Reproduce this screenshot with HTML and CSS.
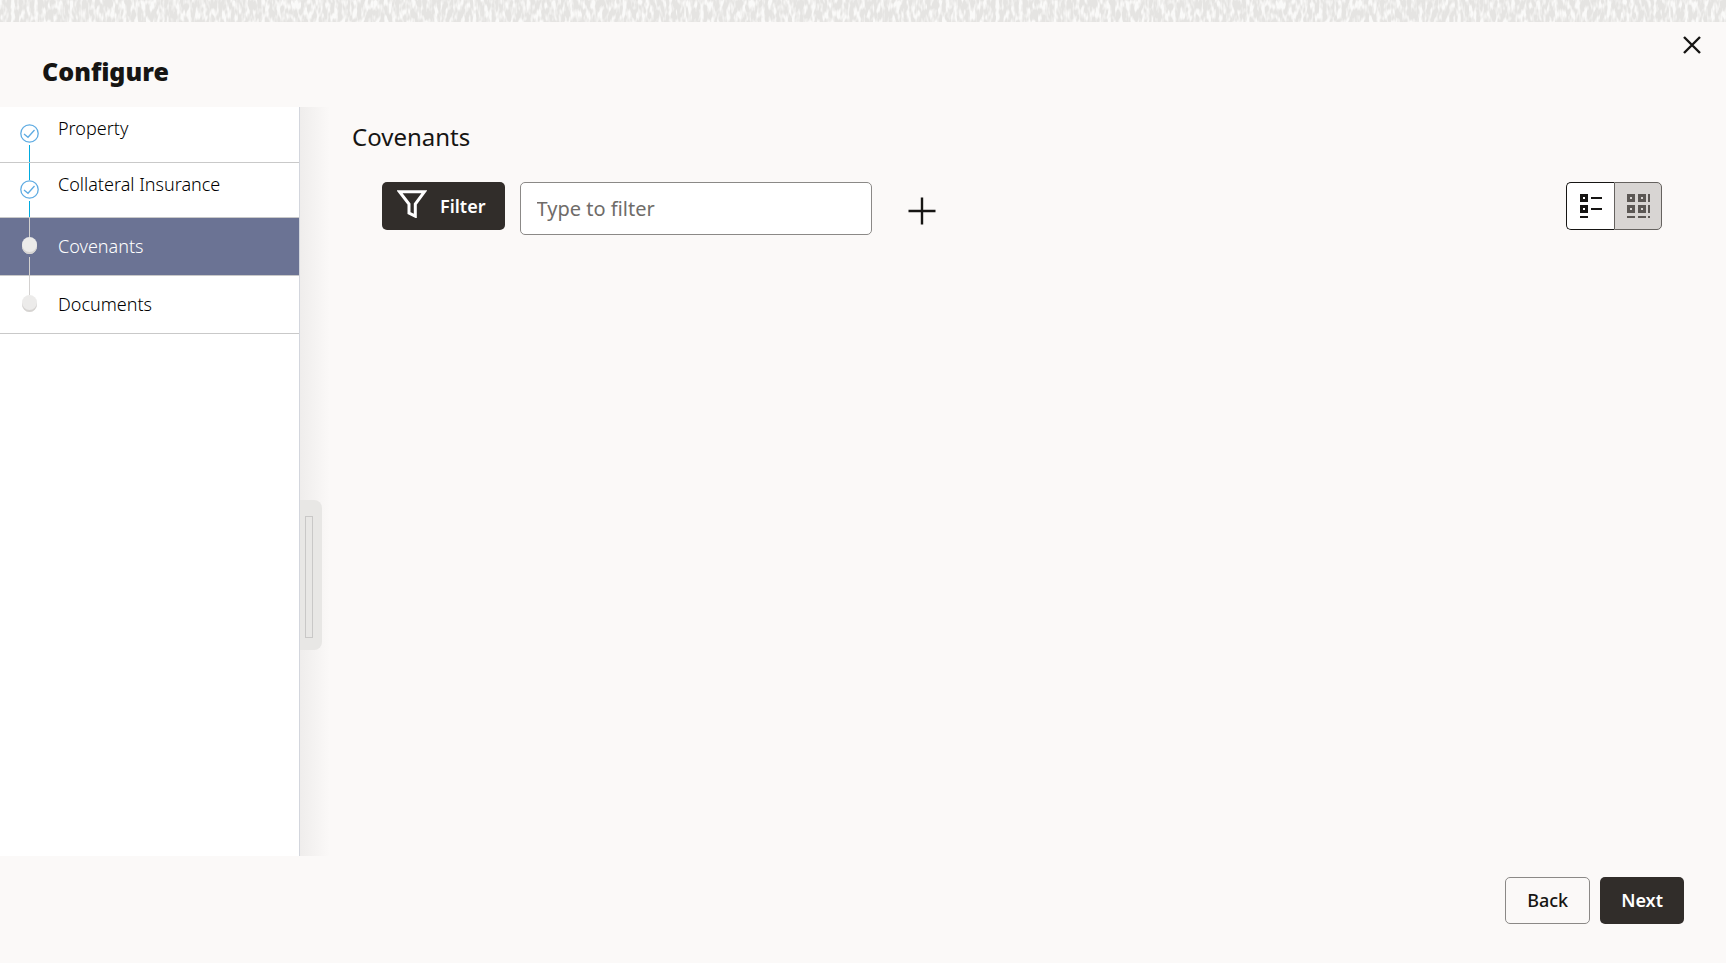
FILE: index.html
```html
<!DOCTYPE html>
<html lang="en">
<head>
    <meta charset="UTF-8">
    <meta name="viewport" content="width=device-width, initial-scale=1.0">
    <title>Configure</title>
    <link rel="stylesheet" href="styles.css">
</head>

<body>
    <!-- Textured strip above the drawer -->
    <svg class="texture" aria-hidden="true">
        <filter id="grain" x="0" y="0" width="100%" height="100%">
            <feTurbulence type="fractalNoise" baseFrequency="0.26 0.1" numOctaves="2" seed="4"/>
            <feColorMatrix values="0 0 0 0 0.96  0 0 0 0 0.955  0 0 0 0 0.945  4 0 0 0 -1.7"/>
        </filter>
        <rect width="100%" height="100%" filter="url(#grain)"/>
    </svg>

    <div class="drawer">
        <header class="drawer-header">
            <h1>Configure</h1>
            <button class="icon-button close" type="button" aria-label="Close">
                <svg width="18" height="18" viewBox="0 0 18 18"><path d="M1 1l16 16M17 1L1 17"/></svg>
            </button>
        </header>

        <div class="drawer-body">
            <nav class="steps" aria-label="Steps">
                <ol>
                    <li class="step done first">
                        <span class="marker">
                            <span class="line"></span>
                            <svg class="tick" width="19" height="19" viewBox="0 0 19 19"><circle cx="9.5" cy="9.5" r="8.700"/><path d="M4 10l4 3.300 6.500-7.300"/></svg>
                            <span class="line"></span>
                        </span>
                        <a href="#property">Property</a>
                    </li>
                    <li class="step done">
                        <span class="marker">
                            <span class="line"></span>
                            <svg class="tick" width="19" height="19" viewBox="0 0 19 19"><circle cx="9.5" cy="9.5" r="8.700"/><path d="M4 10l4 3.300 6.500-7.300"/></svg>
                            <span class="line"></span>
                        </span>
                        <a href="#insurance">Collateral Insurance</a>
                    </li>
                    <li class="step current">
                        <span class="marker">
                            <span class="line"></span>
                            <span class="dot"></span>
                            <span class="line"></span>
                        </span>
                        <a href="#covenants" aria-current="step">Covenants</a>
                    </li>
                    <li class="step last">
                        <span class="marker">
                            <span class="line"></span>
                            <span class="dot"></span>
                            <span class="line"></span>
                        </span>
                        <a href="#documents">Documents</a>
                    </li>
                </ol>
            </nav>

            <div class="gutter">
                <button class="handle" type="button" aria-label="Collapse steps"><span class="grip"></span></button>
            </div>

            <main class="content" id="covenants">
                <h2>Covenants</h2>
                <div class="toolbar">
                    <button class="button dark filter" type="button">
                        <svg width="30" height="28" viewBox="0 0 30 28"><path d="M2.500 1.700h25L18.300 14v12.200L12 23V14z"/></svg>
                        Filter
                    </button>
                    <input class="filter-input" type="text" placeholder="Type to filter" aria-label="Type to filter">
                    <button class="icon-button add" type="button" aria-label="Add">
                        <svg width="28" height="28" viewBox="0 0 28 28"><path d="M14 .5v27M.5 14h27"/></svg>
                    </button>
                    <div class="view-toggle">
                        <button class="view" type="button" aria-label="List view">
                            <svg width="24" height="26" viewBox="0 0 24 26">
                                <path d="M2.500 2.500h5v5h-5zM2.500 13.500h5v5h-5z"/>
                                <path class="thin" d="M12 5h11M12 16h11M1 24h8"/>
                            </svg>
                        </button>
                        <button class="view selected" type="button" aria-label="Grid view">
                            <svg width="24" height="26" viewBox="0 0 24 26">
                                <path d="M2.500 2.500h5v5h-5zM13.500 2.500h5v5h-5zM2.500 13.500h5v5h-5zM13.500 13.500h5v5h-5z"/>
                                <path class="thin" d="M1 24h8M12 24h8M23 1v8M23 12v8M22 24h2"/>
                            </svg>
                        </button>
                    </div>
                </div>
            </main>
        </div>

        <footer class="drawer-footer">
            <button class="button outlined" type="button">Back</button>
            <button class="button dark" type="button">Next</button>
        </footer>
    </div>
</body>
</html>
```
FILE: styles.css
```css
* {
    box-sizing: border-box;
}
body {
    margin: 0;
    min-height: 100vh;
    display: flex;
    flex-direction: column;
    background: #fbf9f8;
    color: #161513;
    font-family: 'Noto Sans', 'Open Sans', sans-serif;
}
h1, h2, ol {
    margin: 0;
    padding: 0;
}
button {
    font-family: inherit;
    cursor: pointer;
}
svg {
    display: block;
    fill: none;
    stroke: currentColor;
}
.texture {
    width: 100%;
    height: 22px;
    flex-shrink: 0;
    background: #e5e4e2;
    stroke: none;
}
.drawer {
    flex: 1;
    display: flex;
    flex-direction: column;
}
.drawer-header {
    display: flex;
    justify-content: space-between;
    align-items: flex-start;
    height: 85px;
    padding: 0 21px 0 42px;
}
.drawer-header h1 {
    margin-top: 31px;
    font-size: 25px;
    line-height: 36px;
    font-weight: 900;
}
.icon-button {
    padding: 4px;
    border: none;
    background: none;
    color: #161513;
    stroke-width: 2.4;
}
.close {
    margin-top: 10px;
}
.drawer-body {
    flex: 1;
    display: flex;
}

/* Steps */
.steps {
    width: 300px;
    background: #fff;
    border-right: 1px solid #d3d6dd;
}
.steps ol {
    list-style: none;
}
.step {
    display: flex;
    align-items: center;
    gap: 19px;
    height: 58px;
    padding-left: 20px;
    border-bottom: 1px solid #c9c9c9;
    color: #d3d1d0;
}
.step a {
    padding-bottom: 2px;
    color: #000;
    font-size: 18px;
    line-height: 24px;
    font-weight: 300;
    text-decoration: none;
}
.step.done {
    height: 55px;
    color: #00abe0;
}
.step.done a {
    padding-bottom: 13px;
}
.step.first {
    height: 56px;
}
.step.current {
    background: #6b7394;
}
.step.current a {
    color: #fff;
}
.marker {
    align-self: stretch;
    width: 19px;
    display: flex;
    flex-direction: column;
    align-items: center;
}
.line {
    flex: 1;
    width: 1px;
    background: currentColor;
}
.first .line:first-child,
.last .line:last-child {
    background: none;
}
.tick {
    margin-bottom: 2px;
    stroke: #5eabe2;
    stroke-width: 1.3;
}
.dot {
    width: 15px;
    height: 17px;
    margin-bottom: 3px;
    border-radius: 8px;
    background: #ecebea;
    box-shadow: inset 0 -2px 0 #d6d4d2;
}

/* Splitter */
.gutter {
    width: 30px;
    display: flex;
    flex-direction: column;
    align-items: flex-start;
    justify-content: flex-end;
    padding-bottom: 206px;
    background: linear-gradient(to right, #efedec, #fbf9f8);
}
.handle {
    width: 22px;
    height: 150px;
    padding: 4px 0 0 5px;
    border: none;
    border-radius: 0 8px 8px 0;
    background: #e8e7e5;
}
.grip {
    display: block;
    width: 8px;
    height: 122px;
    border: 1px solid #c9c8c7;
}

/* Content */
.content {
    flex: 1;
    padding: 13px 64px 0 22px;
}
.content h2 {
    font-size: 24px;
    line-height: 34px;
    font-weight: 400;
}
.toolbar {
    display: flex;
    align-items: flex-start;
    margin-top: 28px;
    padding-left: 30px;
}
.button {
    height: 47px;
    padding: 0 21px 2px;
    border: none;
    border-radius: 5px;
    font-size: 18px;
    font-weight: 600;
    line-height: 24px;
}
.button.dark {
    background: #312d2a;
    color: #fff;
}
.button.outlined {
    border: 1px solid #8b8987;
    background: #fbf9f8;
    color: #161513;
    font-weight: 500;
}
.button.filter {
    display: flex;
    align-items: center;
    gap: 13px;
    height: 48px;
    padding: 0 19px 0 15px;
}
.filter svg {
    margin-bottom: 4px;
    stroke-width: 3;
}
.filter-input {
    width: 352px;
    height: 53px;
    margin-left: 15px;
    padding: 0 16px;
    border: 1px solid #8b8987;
    border-radius: 5px;
    background: #fff;
    font-family: inherit;
    font-size: 20px;
}
.filter-input::placeholder {
    color: #6f6c69;
    opacity: 1;
    font-weight: 400;
}
.add {
    margin: 11px 0 0 32px;
}
.view-toggle {
    display: flex;
    margin-left: auto;
}
.view {
    width: 48px;
    height: 48px;
    padding: 0 0 0 12px;
    border: 1px solid #161513;
    border-right: none;
    border-radius: 5px 0 0 5px;
    background: #fff;
    color: #161513;
    stroke-width: 3;
}
.view.selected {
    padding-left: 11px;
    border: 1px solid #65625f;
    border-radius: 0 5px 5px 0;
    background: #d8d5d3;
    color: #5b5754;
}
.view .thin {
    stroke-width: 2;
}

/* Footer */
.drawer-footer {
    display: flex;
    justify-content: flex-end;
    gap: 10px;
    height: 107px;
    padding: 21px 42px 0;
}
```
